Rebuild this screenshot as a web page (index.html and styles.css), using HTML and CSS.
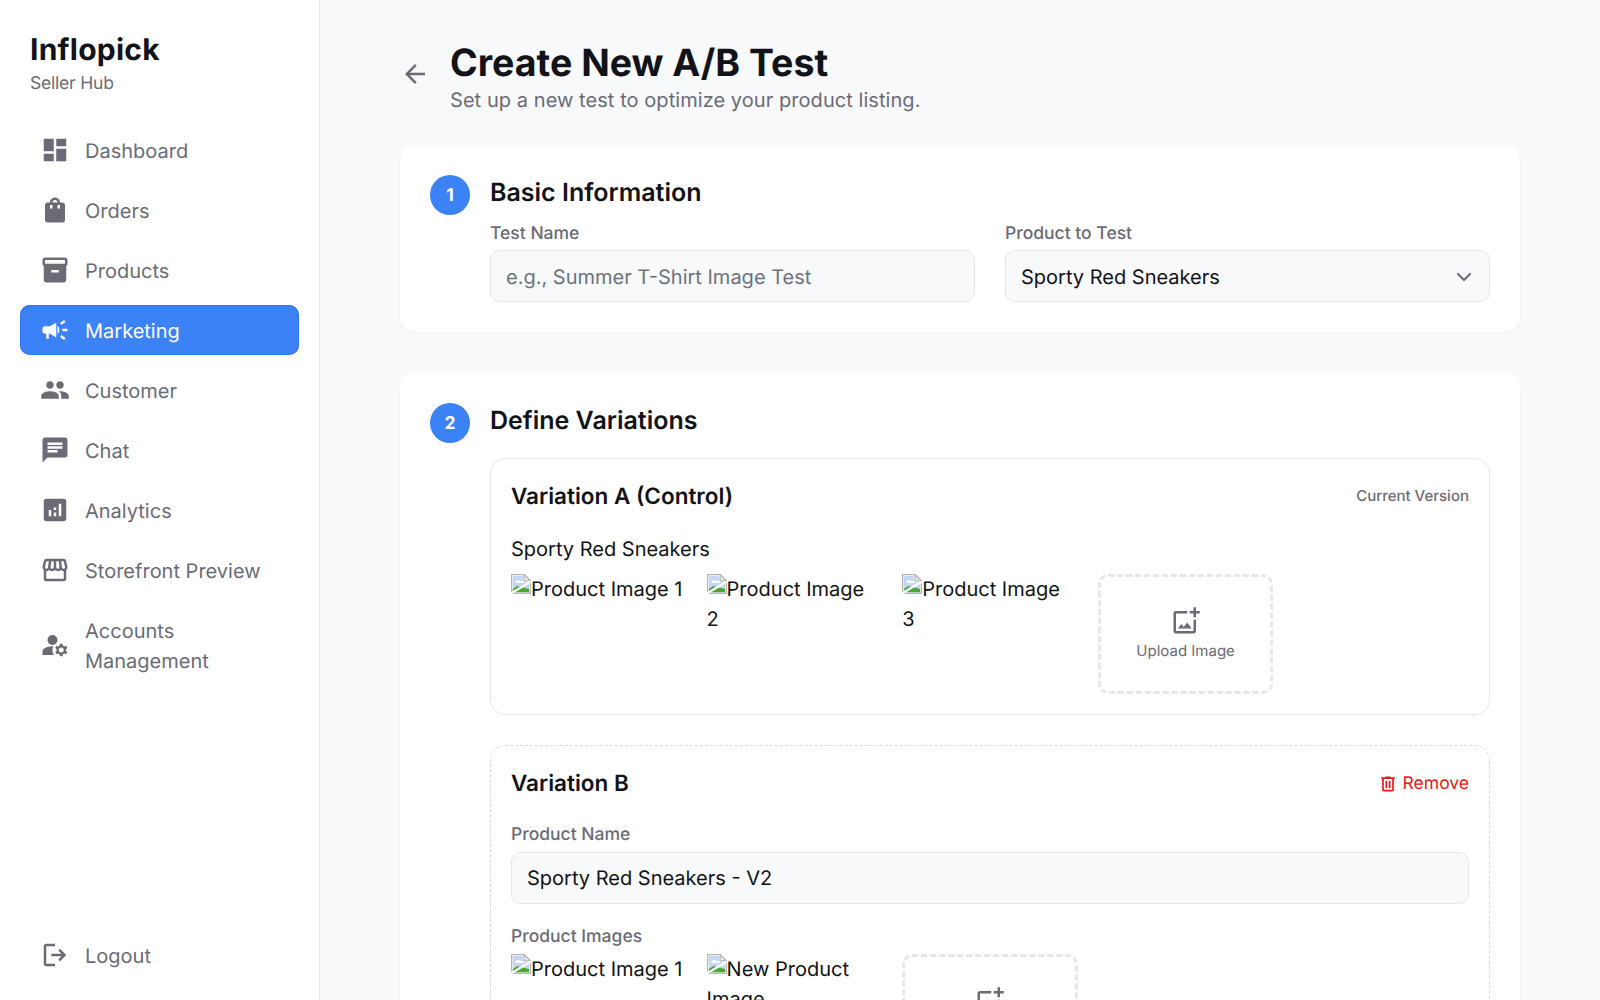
FILE: index.html
```html
<!DOCTYPE html>
<html lang="en">
<head>
<meta charset="utf-8">
<title>Create New A/B Test</title>
<link rel="stylesheet" href="styles.css">
</head>
<body>
<svg class="defs" width="0" height="0" aria-hidden="true">
  <symbol id="broken" viewBox="0 0 16 16">
    <path d="M.5 .5H10.500L15.500 5.500V15.500H.5Z" fill="#fff" stroke="#b5b5b5"/>
    <path d="M10.500 .5V5.500H15.500Z" fill="#f0f0f0" stroke="#b5b5b5"/>
    <path d="M1.500 1.500H9.500V6.500H14.500V14.500H1.500Z" fill="#c3d6f6"/>
    <path d="M3.500 6.800C3.500 4.800 6 4.300 7.200 5.500C9 5 10.500 6 10 7.200H3.500Z" fill="#fff"/>
    <path d="M1.500 14.500V12L5 9.500L9 10.500L14.500 12V14.500Z" fill="#4aa832"/>
    <path d="M0 15.500L16 6" stroke="#fff" stroke-width="1.800" fill="none"/>
  </symbol>
  <symbol id="addimg" viewBox="0 0 24 24">
    <path d="M18 20H4V6h9V4H4c-1.100 0-2 .9-2 2v14c0 1.100.9 2 2 2h14c1.100 0 2-.9 2-2v-9h-2v9zm-7.790-3.170l-1.960-2.360L5.500 18h11l-3.540-4.710zM20 4V1h-2v3h-3c.01.010 0 2 0 2h3v2.990c.010.010 2 0 2 0V6h3V4h-3z" fill="currentColor"/>
  </symbol>
</svg>
<div class="app">
  <aside class="sidebar">
    <div class="brand">
      <div class="brand-name">Inflopick</div>
      <div class="brand-sub">Seller Hub</div>
    </div>
    <nav class="nav">
      <a class="nav-item"><svg class="nav-icon" viewBox="0 0 24 24"><path d="M3 13h8V3H3v10zm0 8h8v-6H3v6zm10 0h8V11h-8v10zm0-18v6h8V3h-8z"/></svg><span>Dashboard</span></a>
      <a class="nav-item"><svg class="nav-icon" viewBox="0 0 24 24"><path d="M18 6h-2c0-2.210-1.790-4-4-4S8 3.790 8 6H6c-1.100 0-2 .9-2 2v12c0 1.100.9 2 2 2h12c1.100 0 2-.9 2-2V8c0-1.100-.9-2-2-2zm-8 4c0 .55-.45 1-1 1s-1-.45-1-1V8h2v2zm2-6c1.100 0 2 .9 2 2h-4c0-1.100.9-2 2-2zm4 6c0 .55-.45 1-1 1s-1-.45-1-1V8h2v2z"/></svg><span>Orders</span></a>
      <a class="nav-item"><svg class="nav-icon" viewBox="0 0 24 24"><path d="M20 2H4c-1 0-2 .9-2 2v3.010c0 .72.43 1.340 1 1.690V20c0 1.100 1.100 2 2 2h14c.9 0 2-.9 2-2V8.700c.57-.35 1-.97 1-1.690V4c0-1.100-1-2-2-2zm-5 12H9v-2h6v2zm5-7H4V4l16-.02V7z"/></svg><span>Products</span></a>
      <a class="nav-item active"><svg class="nav-icon" viewBox="0 0 24 24"><path d="M18 11v2h4v-2h-4zm-2 6.610c.96.710 2.210 1.650 3.200 2.390.4-.53.8-1.070 1.200-1.600-.99-.74-2.240-1.680-3.200-2.400-.4.540-.8 1.080-1.200 1.610zM20.400 5.600c-.4-.53-.8-1.070-1.200-1.600-.99.74-2.240 1.680-3.200 2.400.4.530.8 1.070 1.200 1.600.96-.72 2.210-1.650 3.200-2.400zM4 9c-1.100 0-2 .9-2 2v2c0 1.100.9 2 2 2h1v4h2v-4h1l5 3V6L8 9H4zm11.500 3c0-1.330-.58-2.530-1.500-3.350v6.690c.92-.81 1.500-2.010 1.500-3.340z"/></svg><span>Marketing</span></a>
      <a class="nav-item"><svg class="nav-icon" viewBox="0 0 24 24"><path d="M16 11c1.660 0 2.990-1.340 2.990-3S17.660 5 16 5c-1.660 0-3 1.340-3 3s1.340 3 3 3zm-8 0c1.660 0 2.990-1.340 2.990-3S9.660 5 8 5C6.340 5 5 6.340 5 8s1.340 3 3 3zm0 2c-2.330 0-7 1.170-7 3.500V19h14v-2.500c0-2.330-4.670-3.500-7-3.500zm8 0c-.29 0-.62.020-.97.050 1.160.84 1.970 1.970 1.970 3.450V19h6v-2.500c0-2.330-4.670-3.500-7-3.500z"/></svg><span>Customer</span></a>
      <a class="nav-item"><svg class="nav-icon" viewBox="0 0 24 24"><path d="M20 2H4c-1.100 0-1.990.9-1.990 2L2 22l4-4h14c1.100 0 2-.9 2-2V4c0-1.100-.9-2-2-2zM6 9h12v2H6V9zm8 5H6v-2h8v2zm4-6H6V6h12v2z"/></svg><span>Chat</span></a>
      <a class="nav-item"><svg class="nav-icon" viewBox="0 0 24 24"><path d="M19 3H5c-1.100 0-2 .9-2 2v14c0 1.100.9 2 2 2h14c1.100 0 2-.9 2-2V5c0-1.100-.9-2-2-2zM9 17H7v-5h2v5zm4 0h-2v-3h2v3zm0-5h-2v-2h2v2zm4 5h-2V7h2v10z"/></svg><span>Analytics</span></a>
      <a class="nav-item"><svg class="nav-icon" viewBox="0 0 24 24"><path d="M21.900 8.890l-1.050-4.370c-.22-.9-1-1.520-1.910-1.520H5.050c-.9 0-1.690.63-1.900 1.520L2.100 8.890c-.24 1.020-.02 2.060.62 2.880.08.11.19.19.28.29V19c0 1.100.9 2 2 2h14c1.100 0 2-.9 2-2v-6.940c.09-.09.2-.18.280-.28.640-.82.870-1.870.620-2.890zM18.910 4.990l1.050 4.370c.1.420.01.840-.25 1.170-.14.18-.44.470-.94.470-.61 0-1.140-.49-1.210-1.140L16.980 5l1.930-.01zM13 5h1.960l.54 4.520c.05.390-.07.780-.33 1.070-.22.260-.54.410-.95.410-.67 0-1.220-.59-1.220-1.310V5zM8.490 9.520L9.040 5H11v4.690c0 .72-.55 1.310-1.290 1.310-.34 0-.65-.15-.89-.41-.25-.29-.37-.68-.33-1.070zm-4.450-.16L5.050 5h1.970l-.58 4.860c-.08.650-.600 1.140-1.210 1.140-.49 0-.8-.29-.93-.47-.27-.32-.36-.75-.26-1.170zM5 19v-6.030c.08.010.15.030.23.030.87 0 1.660-.36 2.240-.95.6.600 1.400.95 2.310.95.870 0 1.650-.36 2.230-.93.590.57 1.390.93 2.290.93.840 0 1.640-.35 2.240-.95.580.59 1.370.95 2.240.95.080 0 .15-.02.23-.03V19H5z"/></svg><span>Storefront Preview</span></a>
      <a class="nav-item"><svg class="nav-icon" viewBox="0 0 24 24"><circle cx="10" cy="8" r="4"/><path d="M10.670 13.020C10.450 13.010 10.230 13 10 13c-2.420 0-4.680.67-6.610 1.820C2.510 15.340 2 16.320 2 17.350V20h9.260c-.79-1.130-1.260-2.510-1.260-4 0-1.070.25-2.070.67-2.980zM20.750 16c0-.22-.03-.42-.06-.63l1.140-1.010-1-1.730-1.450.49c-.32-.27-.68-.48-1.080-.63L18 11h-2l-.3 1.490c-.4.150-.76.360-1.080.63l-1.450-.49-1 1.730 1.140 1.010c-.03.210-.06.410-.06.630s.03.420.06.630l-1.140 1.010 1 1.730 1.450-.49c.32.270.68.480 1.080.630L16 21h2l.3-1.490c.4-.15.760-.36 1.080-.63l1.450.49 1-1.730-1.140-1.010c.03-.21.060-.41.060-.63zM17 18c-1.100 0-2-.9-2-2s.9-2 2-2 2 .9 2 2-.9 2-2 2z" fill-rule="evenodd"/></svg><span>Accounts Management</span></a>
    </nav>
    <a class="nav-item logout"><svg class="nav-icon" viewBox="0 0 24 24"><path d="M5 21c-.55 0-1.020-.2-1.410-.59C3.200 20.020 3 19.550 3 19V5c0-.55.2-1.020.59-1.410C3.980 3.200 4.450 3 5 3h7v2H5v14h7v2H5zm11-4-1.380-1.450 2.550-2.550H9v-2h8.170l-2.550-2.550L16 7l5 5-5 5z"/></svg><span>Logout</span></a>
  </aside>
  <main class="main">
    <header class="page-head">
      <svg class="back" viewBox="0 0 24 24"><path d="M20 11H7.830l5.590-5.590L12 4l-8 8 8 8 1.410-1.410L7.830 13H20v-2z"/></svg>
      <div>
        <h1 class="page-title">Create New A/B Test</h1>
        <p class="page-sub">Set up a new test to optimize your product listing.</p>
      </div>
    </header>

    <section class="card">
      <div class="step">1</div>
      <div class="card-body">
        <h2 class="card-title">Basic Information</h2>
        <div class="two-col">
          <div class="field">
            <label class="label">Test Name</label>
            <div class="input placeholder">e.g., Summer T-Shirt Image Test</div>
          </div>
          <div class="field">
            <label class="label">Product to Test</label>
            <div class="input select"><span>Sporty Red Sneakers</span>
              <svg class="chev" viewBox="0 0 20 20"><path d="M6 8l4 4 4-4" fill="none" stroke="currentColor" stroke-width="1.500" stroke-linecap="round" stroke-linejoin="round"/></svg>
            </div>
          </div>
        </div>
      </div>
    </section>

    <section class="card">
      <div class="step">2</div>
      <div class="card-body">
        <h2 class="card-title">Define Variations</h2>
        <div class="variation">
          <div class="var-head">
            <h3 class="var-title">Variation A (Control)</h3>
            <span class="var-note">Current Version</span>
          </div>
          <div class="var-product">Sporty Red Sneakers</div>
          <div class="img-grid">
            <div class="img-cell"><svg class="broken"><use href="#broken"/></svg>Product Image 1</div>
            <div class="img-cell"><svg class="broken"><use href="#broken"/></svg>Product Image 2</div>
            <div class="img-cell"><svg class="broken"><use href="#broken"/></svg>Product Image 3</div>
            <div class="upload"><svg class="upload-icon"><use href="#addimg"/></svg><span>Upload Image</span></div>
          </div>
        </div>
        <div class="variation dashed">
          <div class="var-head">
            <h3 class="var-title">Variation B</h3>
            <a class="remove"><svg class="trash" viewBox="0 0 24 24"><path d="M15 4V3H9v1H4v2h1v13c0 1.100.9 2 2 2h10c1.100 0 2-.9 2-2V6h1V4h-5zm2 15H7V6h10v13zM9 8h2v9H9V8zm4 0h2v9h-2V8z"/></svg>Remove</a>
          </div>
          <div class="field">
            <label class="label">Product Name</label>
            <div class="input">Sporty Red Sneakers - V2</div>
          </div>
          <div class="field images-field">
            <label class="label">Product Images</label>
            <div class="img-grid grid-tight">
              <div class="img-cell"><svg class="broken"><use href="#broken"/></svg>Product Image 1</div>
              <div class="img-cell"><svg class="broken"><use href="#broken"/></svg>New Product Image</div>
              <div class="upload"><svg class="upload-icon"><use href="#addimg"/></svg><span>Upload Image</span></div>
            </div>
          </div>
        </div>
      </div>
    </section>
  </main>
</div>
</body>
</html>
```

FILE: styles.css
```css
* { box-sizing: border-box; }
html, body { margin: 0; height: 100%; overflow: hidden; }
body { font-family: Inter, "Liberation Sans", sans-serif; font-size: 20px; line-height: 30px; color: #111318; background: #f8f9fb; text-rendering: geometricPrecision; }
.defs { position: absolute; }
.app { display: flex; height: 1000px; overflow: hidden; }

.sidebar { width: 320px; flex: none; height: 100%; background: #fff; border-right: 1px solid #e5e7eb; padding: 30px 20px 20px; display: flex; flex-direction: column; }
.brand { padding: 0 10px; margin-bottom: 29px; }
.brand-name { font-size: 30px; line-height: 40px; font-weight: 700; letter-spacing: .25px; color: #111318; }
.brand-sub { font-size: 17.500px; line-height: 25px; letter-spacing: -.2px; padding-top: 1px; color: #6b6b76; }
.nav { display: flex; flex-direction: column; gap: 10px; flex: 1; }
.nav-item { display: flex; align-items: center; gap: 15px; padding: 10px 20px; border-radius: 10px; color: #6b6b76; }
.nav-item span { padding-top: 1px; margin-bottom: -1px; }
.nav-icon { width: 30px; height: 30px; flex: none; fill: currentColor; }
.nav-item.active { background: #3b82f6; color: #fff; box-shadow: inset 0 0 0 1px #2b76f0; }

.main { flex: 1; min-width: 0; padding: 40px 80px; display: flex; flex-direction: column; gap: 40px; }
.page-head { display: flex; align-items: flex-start; gap: 20px; margin-bottom: -10px; }
.back { width: 30px; height: 30px; flex: none; fill: #6b6b76; margin-top: 19px; }
.page-title { margin: 1px 0 -1px; font-size: 37.500px; line-height: 45px; font-weight: 700; color: #111318; }
.page-sub { margin: 0; font-size: 20px; line-height: 30px; letter-spacing: .06px; color: #6b6b76; }

.card { background: #fff; border-radius: 15px; padding: 30px; display: flex; gap: 20px; box-shadow: 0 1px 2px rgba(0,0,0,.04); flex: none; }
.card + .card { margin-top: 1px; }
.step { width: 40px; height: 40px; flex: none; border-radius: 50%; background: #3b82f6; color: #fff; font-size: 17.500px; font-weight: 700; padding-top: 2px; display: flex; align-items: center; justify-content: center; }
.card-body { flex: 1; min-width: 0; }
.card-title { margin: 1px 0 10px; font-size: 25px; line-height: 35px; font-weight: 575; color: #111318; }
.two-col { display: grid; grid-template-columns: 1fr 1fr; gap: 30px; }
.label { display: block; font-size: 17.500px; line-height: 25px; font-weight: 500; color: #6b6b76; }
.input { height: 52px; margin-top: 5px; padding: 0 15px; display: flex; align-items: center; background: #f8f9fb; border: 1px solid #e5e7eb; border-radius: 10px; font-size: 20px; }
.two-col .input { margin-top: 4px; padding-top: 2px; }
.placeholder { color: #6b7280; }
.select { justify-content: space-between; }
.chev { width: 30px; height: 30px; color: #6b7280; margin-right: -5px; flex: none; }

.variation { border: 1px solid #e5e7eb; border-radius: 15px; padding: 20px; margin-top: 19px; }
.variation.dashed { border: 1px dashed #d8dae0; margin-top: 30px; }
.var-head { display: flex; justify-content: space-between; align-items: center; margin-bottom: 20px; }
.dashed .var-head { margin-bottom: 21px; }
.var-title { margin: 0; font-size: 22.500px; line-height: 35px; font-weight: 600; color: #111318; }
.var-note { font-size: 15px; font-weight: 500; color: #6b6b76; margin-top: -1px; }
.var-product { font-weight: 400; font-size: 20px; line-height: 30px; margin-bottom: 10px; }
.img-grid { display: grid; grid-template-columns: repeat(5, 1fr); gap: 20px; }
.grid-tight { margin-top: 5px; }
.img-cell { min-height: 120px; padding-right: 2px; }
.broken { width: 20px; height: 20px; display: inline; vertical-align: 2px; }
.upload { height: 120px; border: 3px dashed #e5e7eb; border-radius: 10px; display: flex; flex-direction: column; align-items: center; justify-content: center; gap: 4px; color: #6b6b76; font-size: 15px; line-height: 22px; }
.upload-icon { width: 30px; height: 30px; flex: none; }
.remove { display: flex; align-items: center; gap: 5px; color: #ef1414; font-size: 17.500px; font-weight: 400; margin-top: 1px; }
.trash { width: 20px; height: 20px; fill: currentColor; margin-left: -1px; }
.images-field { margin-top: 20px; }
```
